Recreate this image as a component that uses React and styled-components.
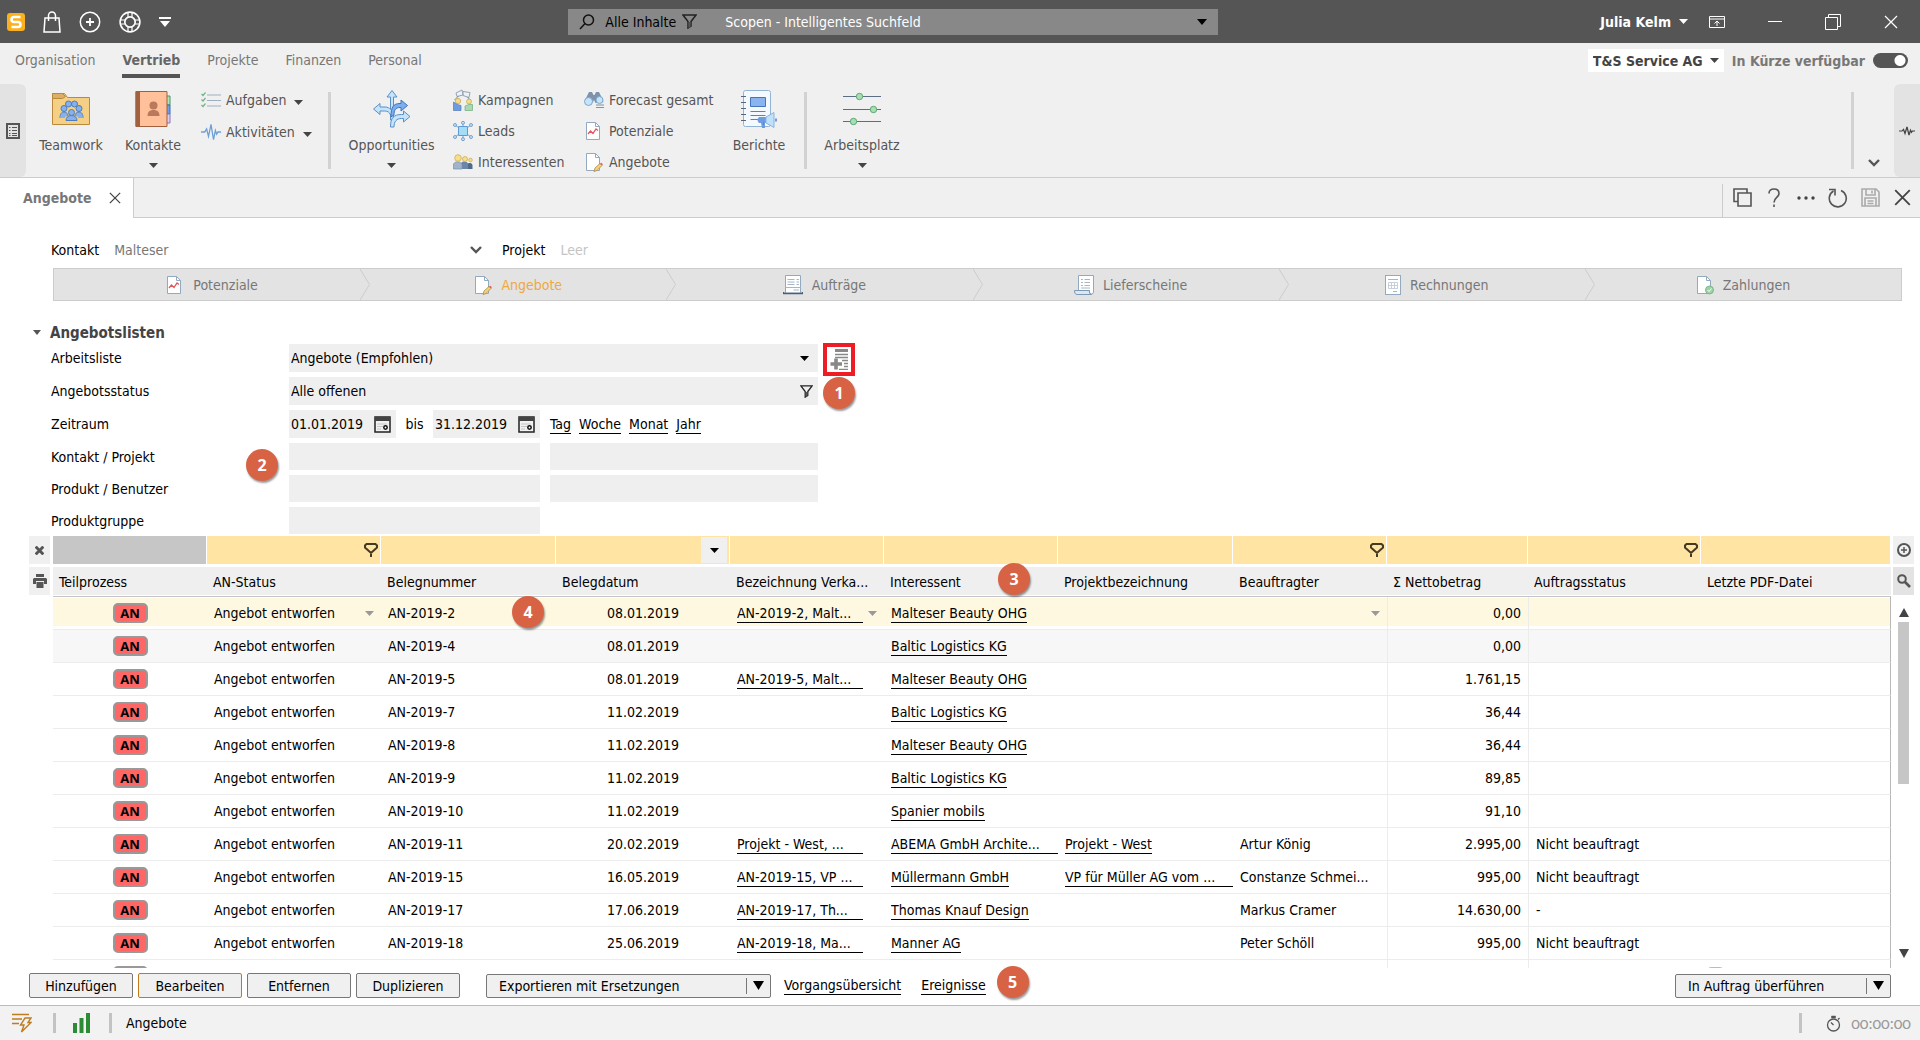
import React from 'react';
import styled, { createGlobalStyle, ThemeProvider, css } from 'styled-components';

const theme = {
  colors: {
    titlebar: '#555555',
    ribbon: '#f0f0f0',
    text: '#000000',
    muted: '#777777',
    dark: '#555555',
    line: '#cccccc',
    filter: '#ffe4a3',
    selected: '#fff8e1',
    accent: '#f0a83c',
    badge: '#d86344',
  },
};

const GlobalStyle = createGlobalStyle`
  * {
    box-sizing: border-box;
  }

  body {
    margin: 0;
  }

  body, button, input, select, table {
    font-family: 'DejaVu Sans Condensed', 'Noto Sans', sans-serif;
    font-size: 14px;
    line-height: 20px;
    color: #000;
  }

  button, select {
    padding: 0;
    border: 0;
    background: none;
    cursor: pointer;
  }

  svg {
    display: block;
    flex: none;
  }
`;

const Page = styled.div`
  display: flex;
  flex-direction: column;
  height: 100vh;
  background: #fff;
  overflow: hidden;
`;

/* ---------- icons ---------- */

const Caret = ({ w = 9, h = 5, color = '#444' }) => (
  <svg width={w} height={h} viewBox="0 0 10 6" preserveAspectRatio="none">
    <path d="M0 0h10L5 6z" fill={color} />
  </svg>
);

const Chevron = () => (
  <svg width="12" height="8" viewBox="0 0 12 8" fill="none" stroke="#555" strokeWidth="2.4">
    <path d="M1 1l5 5 5-5" />
  </svg>
);

const Cross = ({ size = 14, color = '#444', width = 1.5 }) => (
  <svg width={size} height={size} viewBox="0 0 14 14" stroke={color} strokeWidth={width}>
    <path d="M1 1l12 12M13 1L1 13" />
  </svg>
);

const LogoIcon = () => (
  <svg width="18" height="18" viewBox="0 0 18 18">
    <rect width="18" height="18" rx="3" fill="#fbb01e" />
    <path d="M13.5 4H7a2.5 2.5 0 000 5h4a2.5 2.500 0 010 5H4.500" fill="none" stroke="#fff" strokeWidth="2.600" />
  </svg>
);

const BagIcon = () => (
  <svg width="18" height="22" viewBox="0 0 18 22" fill="none" stroke="#fff" strokeWidth="1.5">
    <path d="M2 7h14l1 14H1zM5.500 10V4.500a3.500 3.500 0 017 0V10" />
  </svg>
);

const PlusCircleIcon = () => (
  <svg width="22" height="22" viewBox="0 0 22 22" fill="none" stroke="#fff" strokeWidth="1.5">
    <circle cx="11" cy="11" r="9.700" />
    <path d="M11 7v8M7 11h8" strokeWidth="1.800" />
  </svg>
);

const HelpRingIcon = () => (
  <svg width="22" height="22" viewBox="0 0 22 22" fill="none" stroke="#fff">
    <circle cx="11" cy="11" r="9.900" strokeWidth="1.600" />
    <circle cx="11" cy="11" r="5.200" strokeWidth="1.700" />
    <path d="M9 1.500v4.500M13 1.500v4.500M9 16v4.500M13 16v4.500M1.500 9H6M1.500 13H6M16 9h4.500M16 13h4.500" strokeWidth="1.200" />
  </svg>
);

const QuickMenuIcon = () => (
  <svg width="12" height="10" viewBox="0 0 12 10" fill="#fff">
    <path d="M0 0h12v2H0zM1 4h10L6 10z" />
  </svg>
);

const SearchIcon = () => (
  <svg width="16" height="16" viewBox="0 0 16 16" fill="none" stroke="#111" strokeWidth="1.500">
    <circle cx="9.500" cy="6" r="5" />
    <path d="M6 9.500L1 15" />
  </svg>
);

const FunnelIcon = ({ size = 15 }) => (
  <svg width={size} height={size} viewBox="0 0 15 15" fill="none" stroke="#222" strokeWidth="1.500">
    <path d="M1 1h13L9 7.500V12l-3 2V7.500z" />
    <path d="M6.500 8h2v5l-2 1z" fill="#555" stroke="none" />
  </svg>
);

const ColumnFilterIcon = () => (
  <svg width="14" height="14" viewBox="0 0 14 14" fill="none" stroke="#443a22" strokeWidth="2">
    <path d="M2.500 1h9L13 2.500v2L7 10 1 4.500v-2zM7 9.500V14" />
  </svg>
);

const RibbonToggleIcon = () => (
  <svg width="16" height="12" viewBox="0 0 16 12" fill="none" stroke="#fff">
    <path d="M.5.5h15v11H.5zM.5 3h15M8 10V5.500M5.500 7.500L8 5l2.500 2.500" />
  </svg>
);

const RestoreIcon = () => (
  <svg width="16" height="16" viewBox="0 0 16 16" fill="none" stroke="#fff">
    <path d="M.5 3.500h12v12H.5zM3.500 3.500v-3h12v12h-3" />
  </svg>
);

const ListPanelIcon = () => (
  <svg width="14" height="16" viewBox="0 0 14 16" fill="none" stroke="#555">
    <path d="M1 1h12v14H1z" strokeWidth="2" />
    <path d="M3 4.500h1.500M6 4.500h5M3 7.500h1.500M6 7.500h5M3 10.500h1.500M6 10.500h5M3 12.500h1.500M6 12.500h5" />
  </svg>
);

const PulseIcon = ({ w = 16, h = 10, color = '#444', stroke = 1.3 }) => (
  <svg width={w} height={h} viewBox="0 0 16 12" fill="none" stroke={color} strokeWidth={stroke} preserveAspectRatio="none">
    <path d="M0 6h3l1.500-2L6 9l2-8 2 10 1.500-6 1 2.500 1-1.500H16" />
  </svg>
);

const FolderTeamIcon = () => (
  <svg width="38" height="34" viewBox="0 0 38 34">
    <path d="M.5 1.500h12l3 4h22v27H.5z" fill="#f5cf83" stroke="#b98a3d" />
    <path d="M.5 1.500h10l3 3-3 2H.5z" fill="#dcae66" stroke="#b98a3d" />
    <g fill="#86b1ec" stroke="#4f7cb8">
      <circle cx="16.500" cy="12" r="3" />
      <circle cx="22.500" cy="12" r="3" />
      <circle cx="12" cy="16.500" r="3" />
      <circle cx="27" cy="16.500" r="3" />
      <path d="M8 26c0-4 1.500-6 4-6s4 2 4 4M31 26c0-4-1.500-6-4-6s-4 2-4 4" />
      <circle cx="19.500" cy="20.500" r="3" />
      <path d="M14 28.500c0-3 2-5 5.500-5s5.500 2 5.500 5z" />
      <path d="M8 26h5v-3H9zM31 26h-5v-3h4z" stroke="none" />
    </g>
  </svg>
);

const ContactsIcon = () => (
  <svg width="36" height="36" viewBox="0 0 36 36">
    <path d="M31 5h4v9h-4z" fill="#b5e2b8" stroke="#4d9462" />
    <path d="M31 14h4v9h-4z" fill="#6da0ec" stroke="#3d6dad" />
    <path d="M31 23h4v9h-4z" fill="#dcd0f2" stroke="#8a74b5" />
    <path d="M1 .5h31v35H1z" fill="#ffc09a" stroke="#a1603f" />
    <path d="M.5.5H5v35H.5z" fill="#a1603f" />
    <circle cx="18.500" cy="14.500" r="4" fill="#b9795a" />
    <path d="M12.500 25c0-4 2-6 6-6s6 2 6 6z" fill="#b9795a" />
  </svg>
);

const TasksIcon = () => (
  <svg width="20" height="16" viewBox="0 0 20 16" fill="none">
    <path d="M6 3h14M6 8.500h14M6 14h14" stroke="#9fb0c3" />
    <path d="M.5 2l1.500 1.500L4.500.5M.5 7.500L2 9l2.500-3M.5 13L2 14.500l2.500-3" stroke="#6fb587" strokeWidth="1.200" />
  </svg>
);

const BigArrowsIcon = () => (
  <svg width="38" height="38" viewBox="0 0 38 38">
    <g fill="#c3e4fb" stroke="#5a8fc4">
      <path d="M17.500 30v-5c-1-3-3-4-6-4H7v3.500L.5 19 7 13.500V17h5c2.500 0 4.500 1 5.500 2.500V7H14L19 .5 24 7h-3.500v23z" />
      <path d="M17.500 37c0-9 3-12.500 11-12.500h2V21l6.500 5.500-6.500 5.500v-3.500h-2c-5 0-7.500 3-7.500 8.500z" />
    </g>
    <path d="M18 27c0-9.500 2-13.500 9-13.500h1V10l6.500 5.500L28 21v-3.500h-1c-4.500 0-6 3-6 7.500z" fill="#7aaef0" stroke="#3f74b8" />
  </svg>
);

const CampaignIcon = () => (
  <svg width="20" height="22" viewBox="0 0 20 22">
    <path d="M3 4l6-3 1 5-6 1.500zM10 2.500l7 1-1 5-6-2z" fill="#eef2f6" stroke="#93a3b5" />
    <path d="M1.500 11l4-4M18 12l-3.500-4" stroke="#6e88a8" />
    <circle cx="5" cy="12" r="2.700" fill="#f4dd86" stroke="#c9a64b" strokeWidth=".7" />
    <circle cx="16" cy="12.500" r="2.500" fill="#f4dd86" stroke="#c9a64b" strokeWidth=".7" />
    <path d="M.5 21.500V13l4 2.500 3.500 1v5z" fill="#6d9de0" stroke="#4f7cb8" strokeWidth=".7" />
    <path d="M12 21.500V17l4-1.500 3.500 0v6z" fill="#a9d9b0" stroke="#6fae7c" strokeWidth=".7" />
  </svg>
);

const LeadsIcon = () => (
  <svg width="20" height="20" viewBox="0 0 20 20">
    <path d="M10 1v18M2 4l4 3M18 4l-4 3M2 16l4-3M18 16l-4-3" stroke="#7aa7d0" />
    <path d="M5.500 5.500h9v9h-9z" fill="#a5dcfa" stroke="#5f9bd0" />
    <g fill="#c9e6f8" stroke="#5a8fc4" strokeWidth=".8">
      <circle cx="10" cy="1.800" r="1.500" />
      <circle cx="10" cy="18.200" r="1.500" />
      <circle cx="2" cy="4" r="1.500" />
      <circle cx="18" cy="4" r="1.500" />
      <circle cx="2" cy="16" r="1.500" />
      <circle cx="18" cy="16" r="1.500" />
    </g>
  </svg>
);

const ProspectsIcon = () => (
  <svg width="20" height="16" viewBox="0 0 20 16">
    <path d="M14 15V9.500c2-1 5-1 5.500 1.500v4z" fill="#52698a" />
    <path d="M8 15V9c2-2 6-2 7 1v5z" fill="#6d86a8" />
    <path d="M.5 15v-5c2-3 6-3 8.500 0v5z" fill="#a0b3ca" stroke="#7790ac" strokeWidth=".7" />
    <g fill="#f7df8a" stroke="#c9a64b" strokeWidth=".7">
      <circle cx="5" cy="4" r="3.300" />
      <circle cx="12" cy="5" r="2.500" />
      <circle cx="17.500" cy="6" r="1.800" />
    </g>
  </svg>
);

const BinocularsIcon = () => (
  <svg width="20" height="18" viewBox="0 0 20 18">
    <path d="M3 5l2-4h3l1.500 3h1L12 1h3l2 4 2.500 6-8 1-1.500-3-1.500 3-8-1z" fill="#7f92ab" />
    <circle cx="4.500" cy="10.500" r="4" fill="#c3e4fb" stroke="#7fa6c9" />
    <circle cx="15.500" cy="9" r="3.500" fill="#c3e4fb" stroke="#7fa6c9" />
    <path d="M12 14h8M12 16.500h8" stroke="#7f92ab" />
  </svg>
);

const Sheet = ({ children }) => (
  <svg width="18" height="20" viewBox="0 0 18 20">
    <path d="M1.500 1.500h9l4 4v13h-13z" fill="#fff" stroke="#93a9c0" />
    <path d="M10.500 1.500v4h4" fill="none" stroke="#93a9c0" />
    {children}
  </svg>
);

const PotentialIcon = () => (
  <Sheet>
    <path d="M3 13l2.500-3L8 12.500 11 8l2 1.500" fill="none" stroke="#e0575c" strokeWidth="1.300" />
  </Sheet>
);

const OfferIcon = () => (
  <Sheet>
    <path d="M9 19.500l1-3.500 5-4.500 2 2-5 5z" fill="#f5d27a" stroke="#a98a45" strokeWidth=".8" />
    <path d="M15 11.500l2 2 .8-1.300-1.500-1.500z" fill="#e0575c" />
  </Sheet>
);

const PaymentIcon = () => (
  <Sheet>
    <circle cx="13.500" cy="15" r="4" fill="#9fd3a5" stroke="#6fae7c" strokeWidth=".8" />
    <path d="M11.500 15l1.500 1.500 2.500-3" fill="none" stroke="#fff" />
  </Sheet>
);

const OrderIcon = () => (
  <svg width="20" height="20" viewBox="0 0 20 20" fill="none">
    <path d="M2.500.5h15V18h-15z" fill="#fff" stroke="#93a9c0" />
    <path d="M4.500 4.500h7M13.500 4.500H16M4.500 7h7M13.500 7H16M4.500 9.500h7M13.500 9.500H16M2.500 12.500h15M10.500 15H16" stroke="#a6b6c8" />
    <path d="M.5 17v1.500h19V17" stroke="#4c5f78" strokeWidth="1.500" />
  </svg>
);

const DeliveryIcon = () => (
  <svg width="20" height="20" viewBox="0 0 20 20" fill="none">
    <path d="M4.500.5h15V17a2 2 0 01-4 0v-1.500h-11z" fill="#fff" stroke="#93a9c0" />
    <path d="M.5 15.500h15c-.5 2 .5 4 2 4H3c-2 0-2.500-2-2.500-4z" fill="#d9e8f4" stroke="#7f98b3" />
    <path d="M7 4.500h2M10.500 4.500H16M7 7.500h2M10.500 7.500H16M7 10.500h2M10.500 10.500H16M7 13h9" stroke="#a6b6c8" />
  </svg>
);

const InvoiceIcon = () => (
  <svg width="16" height="20" viewBox="0 0 16 20" fill="none">
    <rect x=".5" y=".5" width="15" height="19" fill="#fff" stroke="#93a9c0" />
    <path d="M3 4.500h10M8 16.500h4" stroke="#a6b6c8" />
    <path d="M3.500 7.500h9v6h-9zM3.500 10.500h9M6.500 7.500v6M9.500 7.500v6" stroke="#c5d0dc" />
  </svg>
);

const ReportsIcon = () => (
  <svg width="36" height="39" viewBox="0 0 36 39" fill="none">
    <rect x="2.500" y=".5" width="27" height="36" rx="2" fill="#f3f9fe" stroke="#90b3d6" />
    <path d="M0 6.500h5M0 12.500h5M0 18.500h5M0 24.500h5M0 30.500h5" stroke="#54687f" />
    <path d="M9.500 7.500h15v9h-15z" fill="#8ab4f0" stroke="#4475b8" />
    <path d="M9.500 21.500h15M9.500 25.500h15M9.500 29.500h8" stroke="#6c8199" />
    <path d="M18 27h7v6h-7c-2-2-2-4 0-6z" fill="#6d9de0" />
    <path d="M25 27l8-4.500v15L25 33z" fill="#bfe2fa" stroke="#8ab4dd" />
    <path d="M20 33h4v5h-3z" fill="#6d9de0" />
    <path d="M22.500 32v3" stroke="#e0575c" />
    <path d="M34 28.500h2v3h-2z" fill="#6d9de0" />
  </svg>
);

const SlidersIcon = () => (
  <svg width="38" height="34" viewBox="0 0 38 34">
    <path d="M0 4.500h38M0 17.500h38M0 29.500h38" stroke="#5c6e86" />
    <g fill="#a9ddb3" stroke="#5fa772">
      <circle cx="16.500" cy="4.500" r="3.200" />
      <circle cx="30.500" cy="17.500" r="3.200" />
      <circle cx="10.500" cy="29.500" r="3.200" />
    </g>
  </svg>
);

const CopyIcon = () => (
  <svg width="19" height="19" viewBox="0 0 19 19" fill="none" stroke="#555" strokeWidth="1.600">
    <path d="M5 13.500H1V1h13v3.500M5 5h13v13H5z" />
  </svg>
);

const QuestionIcon = () => (
  <svg width="12" height="19" viewBox="0 0 12 19" fill="none" stroke="#555" strokeWidth="1.600">
    <path d="M1 5.500C1 2.500 3 1 6 1s5 1.500 5 4.500c0 4-5 4-5 9M6 16.500V19" />
  </svg>
);

const DotsIcon = () => (
  <svg width="18" height="4" viewBox="0 0 18 4" fill="#444">
    <circle cx="2" cy="2" r="1.700" />
    <circle cx="9" cy="2" r="1.700" />
    <circle cx="16" cy="2" r="1.700" />
  </svg>
);

const ReloadIcon = () => (
  <svg width="20" height="20" viewBox="0 0 20 20" fill="none" stroke="#555" strokeWidth="1.600">
    <path d="M13 2.500a8.500 8.500 0 11-7.500.5M1 1.500h6v6" />
  </svg>
);

const SaveIcon = () => (
  <svg width="19" height="19" viewBox="0 0 19 19" fill="none" stroke="#aaa" strokeWidth="1.600">
    <path d="M1 1h14l3 3v14H1zM5 1v6h9V1M4 18v-8h11v8M6.500 13h6M6.500 15.500h6M11 2.500v3" />
  </svg>
);

const CalendarIcon = () => (
  <svg width="17" height="17" viewBox="0 0 17 17">
    <path d="M1 1h15v15H1z" fill="#f2f2f2" stroke="#222" strokeWidth="1.500" />
    <path d="M1 1h15v4H1z" fill="#444" />
    <path d="M3.500 8h10M3.500 10.500h5M3.500 13h4" stroke="#999" strokeDasharray="1 1" />
    <circle cx="11.500" cy="11.500" r="1.700" fill="#fff" stroke="#111" strokeWidth="1.500" />
  </svg>
);

const AddListIcon = () => (
  <svg width="19" height="21" viewBox="0 0 19 21" stroke="#888" fill="none">
    <path d="M5 1.500h13" strokeWidth="3" />
    <path d="M5 5.500h13M5 8.500h13M12 11.500h6M14 14.500h4M14 17.500h4M9 20.500h9" strokeWidth="1.400" />
    <path d="M6 9.500v11M.5 15h11.500" strokeWidth="3.600" />
  </svg>
);

const PrinterIcon = () => (
  <svg width="14" height="14" viewBox="0 0 14 14" fill="#555">
    <path d="M3 0h8v3H3zM1 4h12l1 1v5h-3V7H3v3H0V5zM3.500 8h7v6h-7z" />
  </svg>
);

const CirclePlusSmallIcon = () => (
  <svg width="14" height="14" viewBox="0 0 14 14" fill="none" stroke="#555" strokeWidth="1.500">
    <circle cx="7" cy="7" r="6" strokeWidth="2" />
    <path d="M7 4v6M4 7h6" />
  </svg>
);

const ZoomSmallIcon = () => (
  <svg width="14" height="14" viewBox="0 0 14 14" fill="none" stroke="#555" strokeWidth="2">
    <circle cx="5" cy="5" r="3.800" />
    <path d="M8 8l5 5" strokeWidth="2.600" />
  </svg>
);

const ScrollArrow = ({ down }) => (
  <svg width="10" height="9" viewBox="0 0 10 9" fill="#444">
    <path d={down ? 'M0 0h10L5 9z' : 'M0 9h10L5 0z'} />
  </svg>
);

const LightningIcon = () => (
  <svg width="20" height="20" viewBox="0 0 20 20" fill="none" stroke="#bd7d22" strokeWidth="1.400">
    <path d="M0 1.500h17M0 6h10M0 10.500h7M13 5h6l-3 4.500h3L9.500 19l2.500-7H8.500z" />
  </svg>
);

const SignalIcon = () => (
  <svg width="17" height="20" viewBox="0 0 17 20" fill="#2d8a35">
    <path d="M0 10h4v10H0zM6.500 5h4v15h-4zM13 0h4v20h-4z" />
  </svg>
);

const StopwatchIcon = () => (
  <svg width="15" height="17" viewBox="0 0 15 17" fill="none" stroke="#555" strokeWidth="1.300">
    <circle cx="7.500" cy="10" r="6" />
    <path d="M7.500 10L5 7.500M12 4.500l1.500-1.500" />
    <path d="M5.500 1h4v2h-4z" fill="#555" strokeWidth=".5" />
  </svg>
);

const DocIcon = () => (
  <svg width="15" height="18" viewBox="0 0 15 18">
    <rect x=".5" y=".5" width="14" height="17" rx="2" fill="#eee" stroke="#bbb" />
  </svg>
);

/* ---------- title bar ---------- */

const TitleBar = styled.header`
  display: flex;
  align-items: center;
  height: 43px;
  flex: none;
  background: ${props => props.theme.colors.titlebar};
`;

const QuickAccess = styled.div`
  flex: 4;
  display: flex;
  align-items: center;
  gap: 18px;
  padding-left: 7px;
`;

const WindowTools = styled.div`
  flex: 5;
  display: flex;
  align-items: center;
  justify-content: flex-end;
`;

const IconButton = styled.button`
  display: flex;
  align-items: center;
  justify-content: center;
`;

const SearchBar = styled.div`
  display: flex;
  align-items: center;
  width: 650px;
  height: 26px;
  padding: 0 11px;
  background: #888;
`;

const SearchScope = styled.button`
  display: flex;
  align-items: center;
  gap: 6px;
  margin: 0 28px 0 10px;
`;

const SearchInput = styled.input`
  flex: 1;
  min-width: 0;
  padding: 0;
  border: 0;
  background: none;

  &::placeholder {
    color: #fff;
    opacity: 1;
  }
`;

const UserButton = styled.button`
  display: flex;
  align-items: center;
  gap: 8px;
  margin-right: 21px;
  color: #fff;
  font-weight: 700;
`;

const WindowButtons = styled.div`
  display: flex;
  margin-left: 21px;
`;

const WindowButton = styled.button`
  display: flex;
  align-items: center;
  justify-content: center;
  width: 58px;
  height: 43px;
`;

const MinimizeLine = styled.span`
  width: 14px;
  height: 1px;
  background: #fff;
`;

/* ---------- ribbon ---------- */

const MenuBar = styled.nav`
  display: flex;
  align-items: flex-start;
  justify-content: space-between;
  flex: none;
  height: 41px;
  padding: 6px 12px 0 15px;
  background: ${props => props.theme.colors.ribbon};
`;

const MenuTabs = styled.div`
  display: flex;
  gap: 27px;
`;

const MenuTab = styled.a`
  padding: 1px 0 4px;
  border-bottom: 4px solid ${props => (props.$active ? props.theme.colors.dark : 'transparent')};
  color: ${props => (props.$active ? '#666' : props.theme.colors.muted)};
  font-weight: ${props => (props.$active ? 700 : 400)};
  text-decoration: none;
`;

const MenuRight = styled.div`
  display: flex;
  align-items: center;
  gap: 8px;
`;

const CompanyPicker = styled.div`
  display: flex;
  align-items: center;
  height: 23px;
  padding: 0 5px;
  background: #fff;

  select {
    appearance: none;
    color: #444;
    font-weight: 700;
    padding-right: 7px;
  }
`;

const SoonLabel = styled.label`
  color: ${props => props.theme.colors.muted};
  font-weight: 700;
`;

const Toggle = styled.input`
  appearance: none;
  width: 35px;
  height: 15px;
  margin: 0;
  border-radius: 8px;
  background: radial-gradient(circle at 27px 50%, #fff 0 5px, transparent 6px) #555;
`;

const Ribbon = styled.div`
  display: flex;
  flex: none;
  height: 94px;
  background: ${props => props.theme.colors.ribbon};
  border-bottom: 1px solid ${props => props.theme.colors.line};
`;

const SidePanelButton = styled.button`
  display: flex;
  align-items: center;
  justify-content: center;
  width: 26px;
  background: #e3e3e3;
  border-radius: ${props => (props.$right ? '6px 0 0 6px' : '0 6px 6px 0')};
`;

const RibbonContent = styled.div`
  flex: 1;
  display: flex;
  padding-right: 14px;
`;

const LargeButton = styled.button`
  display: grid;
  grid-template-rows: 50px 22px 18px;
  justify-items: center;
  align-items: center;
  align-content: start;
  width: ${props => props.$width}px;
  color: ${props => props.theme.colors.dark};
`;

const SmallColumn = styled.div`
  display: flex;
  flex-direction: column;
  width: ${props => props.$width}px;
  padding-left: ${props => props.$indent || 0}px;
`;

const SmallButton = styled.button`
  display: flex;
  align-items: center;
  gap: 5px;
  height: 32px;
  white-space: nowrap;
  color: ${props => props.theme.colors.dark};
`;

const SmallIcon = styled.span`
  display: flex;
  justify-content: center;
  width: 20px;
`;

const SmallCaret = styled.span`
  padding: 4px 0 0 3px;
`;

const RibbonDivider = styled.span`
  width: 3px;
  height: 77px;
  margin: 8px ${props => props.$after || 0}px 0 ${props => props.$before || 0}px;
  background: #d2d2d2;
`;

const ExpandButton = styled.button`
  align-self: flex-end;
  padding-bottom: 10px;
`;

const Spacer = styled.div`
  flex: 1;
`;

/* ---------- document tabs ---------- */

const DocBar = styled.div`
  display: flex;
  justify-content: space-between;
  flex: none;
  height: 40px;
  background: ${props => props.theme.colors.ribbon};
`;

const DocTab = styled.div`
  display: flex;
  align-items: center;
  gap: 17px;
  padding: 0 12px 0 23px;
  background: #fff;
  border-right: 1px solid ${props => props.theme.colors.line};
  color: ${props => props.theme.colors.muted};
  font-weight: 700;
`;

const DocFill = styled.div`
  flex: 1;
  display: flex;
  justify-content: flex-end;
  padding-top: 6px;
  border-bottom: 1px solid ${props => props.theme.colors.line};
`;

const DocActions = styled.div`
  display: grid;
  grid-template-columns: repeat(6, 32px);
  padding: 0 2px 6px 3px;
  border-left: 1px solid ${props => props.theme.colors.line};
`;

/* ---------- content ---------- */

const Content = styled.main`
  flex: 1;
  min-height: 0;
  display: flex;
  flex-direction: column;
  padding-top: 18px;
`;

const ContextRow = styled.div`
  display: flex;
  align-items: center;
  flex: none;
  gap: 20px;
  height: 28px;
  margin: 0 0 4px 51px;
`;

const ContextField = styled.div`
  display: flex;
  align-items: center;
  width: ${props => props.$width}px;

  label {
    margin-right: 15px;
  }
`;

const ContextInput = styled.input`
  flex: 1;
  min-width: 0;
  padding: 0;
  border: 0;
  color: ${props => props.theme.colors.muted};

  &::placeholder {
    color: #c4c4c4;
    opacity: 1;
  }
`;

const ProcessBar = styled.nav`
  display: flex;
  flex: none;
  height: 33px;
  margin: 0 18px 0 53px;
  padding-right: 10px;
  border: 1px solid ${props => props.theme.colors.line};
  background: #e3e3e3;
`;

const ProcessStep = styled.a`
  flex: 1;
  display: flex;
  align-items: center;
  color: ${props => (props.$active ? props.theme.colors.accent : props.theme.colors.muted)};
  text-decoration: none;
`;

const StepLabel = styled.span`
  flex: 1;
  display: flex;
  align-items: center;
  justify-content: center;
  gap: 9px;
  padding-left: 10px;
`;

/* reaches into the next step */
const StepArrow = styled.svg`
  margin-right: -10px;
`;

const SectionHead = styled.h2`
  display: flex;
  align-items: center;
  gap: 9px;
  flex: none;
  height: 23px;
  margin: 20px 0 0 33px;
  color: #444;
  font-size: 15px;
  font-weight: 700;
`;

const FilterArea = styled.div`
  display: flex;
  flex: none;
  gap: 5px;
  margin: 0 0 2px 51px;
`;

const FilterGrid = styled.form`
  position: relative;
  display: grid;
  grid-template-columns: 228px 251px 268px;
  grid-template-rows: repeat(3, 28px) repeat(3, 27px);
  gap: 5px 10px;
  align-items: center;
`;

const FieldBox = styled.div`
  display: flex;
  align-items: center;
  align-self: stretch;
  padding: 0 5px 0 2px;
  background: #efefef;
  ${props =>
    props.$wide &&
    css`
      grid-column: 2 / 4;
    `}

  input,
  select {
    appearance: none;
    flex: 1;
    min-width: 0;
    padding: 0;
    border: 0;
    background: none;
  }

  > svg {
    margin-right: 4px;
  }
`;

const DateRange = styled.div`
  display: grid;
  grid-template-columns: 107px 1fr 107px;
  align-self: stretch;
  align-items: center;
  text-align: center;
`;

const QuickRanges = styled.div`
  grid-column: 3;
  display: flex;
  gap: 8px;
`;

const TextLink = styled.a`
  color: #000;
  line-height: 18px;
  text-decoration: none;
  border-bottom: 1px solid #000;
`;

const SideTools = styled.div`
  display: flex;
  flex-direction: column;
  align-items: center;
  gap: 5px;
  width: 32px;
  padding-top: 3px;
`;

const AddButton = styled.button`
  display: flex;
  align-items: center;
  justify-content: center;
  width: 24px;
  height: 25px;
  outline: 4px solid #ee1c25;
`;

const Badge = styled.span`
  display: flex;
  align-items: center;
  justify-content: center;
  width: 32px;
  height: 32px;
  border-radius: 50%;
  background: ${props => props.theme.colors.badge};
  box-shadow: 1px 2px 2px rgba(0, 0, 0, 0.4);
  color: #fff;
  font: 700 16px 'Open Sans', sans-serif;
`;

const FloatingBadge = styled(Badge)`
  position: absolute;
  left: ${props => props.$left}px;
  top: ${props => props.$top}px;
  z-index: 1;
`;

/* ---------- table ---------- */

const TableArea = styled.section`
  flex: 1;
  min-height: 0;
  display: flex;
  padding: 0 6px 0 29px;
`;

const Rail = styled.div`
  display: flex;
  flex-direction: column;
  align-items: center;
  gap: 3px;
  width: 21px;
`;

const RailButton = styled.button`
  display: flex;
  align-items: center;
  justify-content: center;
  width: 100%;
  height: 28px;
  background: ${props => (props.$dark ? '#e3e3e3' : '#f0f0f0')};
`;

const ScrollBar = styled.div`
  flex: 1;
  display: flex;
  flex-direction: column;
  align-items: center;
  gap: 5px;
  padding: 10px 0;
`;

const ScrollThumb = styled.div`
  width: 11px;
  height: 162px;
  background: #c6c6c6;
`;

const TableClip = styled.div`
  flex: 1;
  min-width: 0;
  margin: 0 2px 0 3px;
  overflow: hidden;
`;

const Table = styled.table`
  width: 100%;
  table-layout: fixed;
  border-collapse: separate;
  border-spacing: 0;
`;

const FilterCell = styled.td`
  height: 31px;
  padding: 0;
  border-bottom: 3px solid #fff;
  border-right: 1px solid #fff;
  background: ${props => (props.$plain ? '#c6c6c6' : props.theme.colors.filter)};

  button {
    margin: 0 2px 0 auto;
  }
`;

const DropButton = styled(IconButton)`
  width: 26px;
  height: 26px;
  background: #f0f0f0;
`;

const HeadCell = styled.th`
  position: relative;
  height: 30px;
  padding: 0 0 0 6px;
  border-bottom: 1px solid #c3c3c9;
  box-shadow: inset 0 -1px #fff;
  background: #efefef;
  font-weight: 400;
  text-align: left;
  white-space: nowrap;
`;

const Row = styled.tr`
  background: ${props => (props.$selected ? props.theme.colors.selected : props.$alt ? '#f7f7f7' : '#fff')};

  td {
    ${props =>
      props.$selected &&
      css`
        box-shadow: inset 0 -3px #fff, inset 0 1px #fff;
      `}
  }
`;

const Cell = styled.td`
  position: relative;
  height: 33px;
  padding: 0 ${props => props.$right || 0}px 0 7px;
  border-bottom: 1px solid #ececec;
  text-align: ${props => props.$align || 'left'};
  white-space: nowrap;
  ${props =>
    props.$lined &&
    css`
      border-left: 1px solid #ececec;
    `}
  &:last-child {
    border-right: 1px solid #b8b8b8;
  }
`;

const CellFlex = styled.div`
  display: flex;
  align-items: center;
  justify-content: space-between;
`;

const RecordLink = styled(TextLink)`
  display: inline-block;
  overflow: hidden;
  vertical-align: middle;
  min-width: ${props => (props.$cut ? '100%' : '0')};
  max-width: 100%;
`;

const NameCell = styled.div`
  width: 126px;
`;

const Pill = styled.span`
  display: block;
  width: 35px;
  height: 20px;
  margin: 0 auto;
  border: 2px solid #999;
  border-radius: 5px;
  background: #ff6666;
  font: 700 13px/16px 'Open Sans', sans-serif;
  text-align: center;
`;

/* ---------- footer ---------- */

const ActionBar = styled.div`
  display: flex;
  align-items: center;
  flex: none;
  gap: 5px;
  height: 37px;
  padding: 0 29px 2px;
`;

const ActionButton = styled.button`
  width: 104px;
  height: 25px;
  border: 1px solid ${props => (props.$primary ? '#c07a1c' : '#777')};
  border-radius: 2px;
  background: #f0f0f0;
`;

const SplitButton = styled.div`
  display: flex;
  align-items: center;
  width: ${props => props.$width}px;
  height: 24px;
  margin: 0 8px 0 ${props => (props.$push ? 'auto' : '21px')};
  padding-left: 12px;
  border: 1px solid #777;
  border-radius: 2px;
  background: #f0f0f0;

  button:first-child {
    flex: 1;
    text-align: left;
  }

  button:last-child {
    height: 16px;
    padding: 0 6px;
    border-left: 1px solid #777;
  }

  &:last-child {
    margin-right: 0;
  }
`;

const ActionLink = styled(TextLink)`
  margin-right: 15px;
`;

const BadgeAnchor = styled.span`
  position: relative;
`;

const StatusBar = styled.footer`
  display: flex;
  align-items: center;
  flex: none;
  height: 35px;
  padding: 0 9px 0 12px;
  border-top: 1px solid #bbb;
  background: #f2f2f2;
`;

const StatusDivider = styled.span`
  width: 3px;
  height: 20px;
  margin: 0 ${props => props.$right}px 0 ${props => props.$left}px;
  background: #c3c3c3;
`;

const Timer = styled.span`
  margin-left: 10px;
  color: #999;
  font: 16px/20px Lato, sans-serif;
  font-variant-numeric: oldstyle-nums;
`;

const menuTabs = ['Organisation', 'Vertrieb', 'Projekte', 'Finanzen', 'Personal'];

const steps = [
  ['Potenziale', PotentialIcon],
  ['Angebote', OfferIcon],
  ['Aufträge', OrderIcon],
  ['Lieferscheine', DeliveryIcon],
  ['Rechnungen', InvoiceIcon],
  ['Zahlungen', PaymentIcon],
];

const columns = [
  { title: 'Teilprozess', width: 154, plain: true },
  { title: 'AN-Status', width: 174, filter: true },
  { title: 'Belegnummer', width: 175 },
  { title: 'Belegdatum', width: 174, drop: true },
  { title: 'Bezeichnung Verka...', width: 154 },
  { title: 'Interessent', width: 174 },
  { title: 'Projektbezeichnung', width: 175 },
  { title: 'Beauftragter', width: 154, filter: true },
  { title: 'Σ Nettobetrag', width: 141 },
  { title: 'Auftragsstatus', width: 173, filter: true },
  { title: 'Letzte PDF-Datei' },
];

const offers = [
  { no: 'AN-2019-2', date: '08.01.2019', name: 'AN-2019-2, Malt...', customer: 'Malteser Beauty OHG', sum: '0,00' },
  { no: 'AN-2019-4', date: '08.01.2019', customer: 'Baltic Logistics KG', sum: '0,00' },
  { no: 'AN-2019-5', date: '08.01.2019', name: 'AN-2019-5, Malt...', customer: 'Malteser Beauty OHG', sum: '1.761,15' },
  { no: 'AN-2019-7', date: '11.02.2019', customer: 'Baltic Logistics KG', sum: '36,44' },
  { no: 'AN-2019-8', date: '11.02.2019', customer: 'Malteser Beauty OHG', sum: '36,44' },
  { no: 'AN-2019-9', date: '11.02.2019', customer: 'Baltic Logistics KG', sum: '89,85' },
  { no: 'AN-2019-10', date: '11.02.2019', customer: 'Spanier mobils', sum: '91,10' },
  { no: 'AN-2019-11', date: '20.02.2019', name: 'Projekt - West, ...', customer: 'ABEMA GmbH Archite...', project: 'Projekt - West', agent: 'Artur König', sum: '2.995,00', state: 'Nicht beauftragt' },
  { no: 'AN-2019-15', date: '16.05.2019', name: 'AN-2019-15, VP ...', customer: 'Müllermann GmbH', project: 'VP für Müller AG vom ...', agent: 'Constanze Schmei...', sum: '995,00', state: 'Nicht beauftragt' },
  { no: 'AN-2019-17', date: '17.06.2019', name: 'AN-2019-17, Th...', customer: 'Thomas Knauf Design', agent: 'Markus Cramer', sum: '14.630,00', state: '-' },
  { no: 'AN-2019-18', date: '25.06.2019', name: 'AN-2019-18, Ma...', customer: 'Manner AG', agent: 'Peter Schöll', sum: '995,00', state: 'Nicht beauftragt' },
];

const Record = ({ children }) =>
  children ? (
    <RecordLink href="#" $cut={children.endsWith('...')}>
      {children}
    </RecordLink>
  ) : null;

const Large = ({ icon, label, width, menu }) => (
  <LargeButton type="button" $width={width}>
    {icon}
    <span>{label}</span>
    {menu && <Caret />}
  </LargeButton>
);

const Small = ({ icon, label, menu }) => (
  <SmallButton type="button">
    <SmallIcon>{icon}</SmallIcon>
    {label}
    {menu && (
      <SmallCaret>
        <Caret />
      </SmallCaret>
    )}
  </SmallButton>
);

const DateField = ({ id, value, label }) => (
  <FieldBox>
    <input id={id} aria-label={label} defaultValue={value} />
    <IconButton type="button" aria-label="Kalender">
      <CalendarIcon />
    </IconButton>
  </FieldBox>
);

const OfferRow = ({ offer, index }) => {
  const selected = index === 0;

  return (
    <Row $selected={selected} $alt={index === 1}>
      <Cell $right={7}>
        <Pill>AN</Pill>
      </Cell>
      <Cell $right={7}>
        <CellFlex>
          Angebot entworfen
          {selected && <Caret color="#999" />}
        </CellFlex>
      </Cell>
      <Cell>
        {offer.no}
        {selected && (
          <FloatingBadge $left={131} $top={-1}>
            4
          </FloatingBadge>
        )}
      </Cell>
      <Cell $align="center" $right={7}>
        {offer.date}
      </Cell>
      <Cell $right={7}>
        <CellFlex>
          <NameCell>
            <Record>{offer.name}</Record>
          </NameCell>
          {selected && <Caret color="#999" />}
        </CellFlex>
      </Cell>
      <Cell>
        <Record>{offer.customer}</Record>
      </Cell>
      <Cell>
        <Record>{offer.project}</Record>
      </Cell>
      <Cell $right={7}>
        <CellFlex>
          <span>{offer.agent}</span>
          {selected && <Caret color="#999" />}
        </CellFlex>
      </Cell>
      <Cell $align="right" $right={7} $lined>
        {offer.sum}
      </Cell>
      <Cell $lined>{offer.state}</Cell>
      <Cell />
    </Row>
  );
};

export default function App() {
  return (
    <ThemeProvider theme={theme}>
      <GlobalStyle />
      <Page>
        <TitleBar>
          <QuickAccess>
            <LogoIcon />
            <IconButton aria-label="Shop"><BagIcon /></IconButton>
            <IconButton aria-label="Neu"><PlusCircleIcon /></IconButton>
            <IconButton aria-label="Hilfe"><HelpRingIcon /></IconButton>
            <IconButton aria-label="Mehr"><QuickMenuIcon /></IconButton>
          </QuickAccess>
          <SearchBar>
            <SearchIcon />
            <SearchScope>
              Alle Inhalte
              <FunnelIcon />
            </SearchScope>
            <SearchInput aria-label="Suche" placeholder="Scopen - Intelligentes Suchfeld" />
            <IconButton aria-label="Suchverlauf"><Caret w={10} h={6} color="#000" /></IconButton>
          </SearchBar>
          <WindowTools>
            <UserButton>
              Julia Kelm
              <Caret color="#fff" />
            </UserButton>
            <IconButton aria-label="Menüband"><RibbonToggleIcon /></IconButton>
            <WindowButtons>
              <WindowButton aria-label="Minimieren"><MinimizeLine /></WindowButton>
              <WindowButton aria-label="Wiederherstellen"><RestoreIcon /></WindowButton>
              <WindowButton aria-label="Schließen"><Cross color="#fff" width={1.2} /></WindowButton>
            </WindowButtons>
          </WindowTools>
        </TitleBar>

        <MenuBar>
          <MenuTabs>
            {menuTabs.map(tab => (
              <MenuTab key={tab} href="#" $active={tab === 'Vertrieb'}>
                {tab}
              </MenuTab>
            ))}
          </MenuTabs>
          <MenuRight>
            <CompanyPicker>
              <select aria-label="Firma">
                <option>T&amp;S Service AG</option>
              </select>
              <Caret />
            </CompanyPicker>
            <SoonLabel htmlFor="soon">In Kürze verfügbar</SoonLabel>
            <Toggle id="soon" type="checkbox" defaultChecked />
          </MenuRight>
        </MenuBar>

        <Ribbon>
          <SidePanelButton aria-label="Navigation"><ListPanelIcon /></SidePanelButton>
          <RibbonContent>
            <Large icon={<FolderTeamIcon />} label="Teamwork" width={90} />
            <Large icon={<ContactsIcon />} label="Kontakte" width={74} menu />
            <SmallColumn $width={138} $indent={11}>
              <Small icon={<TasksIcon />} label="Aufgaben" menu />
              <Small icon={<PulseIcon w={20} h={18} color="#6d9fd6" stroke={1} />} label="Aktivitäten" menu />
            </SmallColumn>
            <RibbonDivider />
            <Large icon={<BigArrowsIcon />} label="Opportunities" width={121} menu />
            <SmallColumn $width={132} $indent={1}>
              <Small icon={<CampaignIcon />} label="Kampagnen" />
              <Small icon={<LeadsIcon />} label="Leads" />
              <Small icon={<ProspectsIcon />} label="Interessenten" />
            </SmallColumn>
            <SmallColumn $width={138}>
              <Small icon={<BinocularsIcon />} label="Forecast gesamt" />
              <Small icon={<PotentialIcon />} label="Potenziale" />
              <Small icon={<OfferIcon />} label="Angebote" />
            </SmallColumn>
            <Large icon={<ReportsIcon />} label="Berichte" width={74} />
            <RibbonDivider $before={8} $after={5} />
            <Large icon={<SlidersIcon />} label="Arbeitsplatz" width={100} menu />
            <Spacer />
            <RibbonDivider $after={14} />
            <ExpandButton aria-label="Menüband erweitern"><Chevron /></ExpandButton>
          </RibbonContent>
          <SidePanelButton $right aria-label="Aktivität"><PulseIcon /></SidePanelButton>
        </Ribbon>

        <DocBar>
          <DocTab>
            Angebote
            <IconButton aria-label="Tab schließen"><Cross size={12} /></IconButton>
          </DocTab>
          <DocFill>
            <DocActions>
              <IconButton aria-label="Kopieren"><CopyIcon /></IconButton>
              <IconButton aria-label="Hilfe"><QuestionIcon /></IconButton>
              <IconButton aria-label="Mehr"><DotsIcon /></IconButton>
              <IconButton aria-label="Neu laden"><ReloadIcon /></IconButton>
              <IconButton aria-label="Speichern"><SaveIcon /></IconButton>
              <IconButton aria-label="Schließen"><Cross size={17} /></IconButton>
            </DocActions>
          </DocFill>
        </DocBar>

        <Content>
          <ContextRow>
            <ContextField $width={431}>
              <label htmlFor="kontakt">Kontakt</label>
              <ContextInput id="kontakt" defaultValue="Malteser" />
              <IconButton aria-label="Kontakt wählen"><Chevron /></IconButton>
            </ContextField>
            <ContextField $width={400}>
              <label htmlFor="projekt">Projekt</label>
              <ContextInput id="projekt" placeholder="Leer" />
            </ContextField>
          </ContextRow>

          <ProcessBar>
            {steps.map(([label, Icon], i) => (
              <ProcessStep key={label} href="#" $active={label === 'Angebote'}>
                <StepLabel>
                  <Icon />
                  {label}
                </StepLabel>
                {i < steps.length - 1 && (
                  <StepArrow width="10" height="31" viewBox="0 0 10 31" fill="none" stroke="#ccc">
                    <path d="M0 0l9.500 15.500L0 31" />
                  </StepArrow>
                )}
              </ProcessStep>
            ))}
          </ProcessBar>

          <SectionHead>
            <Caret w={8} color="#555" />
            Angebotslisten
          </SectionHead>
          <FilterArea>
            <FilterGrid>
              <label htmlFor="liste">Arbeitsliste</label>
              <FieldBox $wide>
                <select id="liste">
                  <option>Angebote (Empfohlen)</option>
                </select>
                <Caret color="#000" />
              </FieldBox>
              <label htmlFor="status">Angebotsstatus</label>
              <FieldBox $wide>
                <input id="status" defaultValue="Alle offenen" />
                <IconButton type="button" aria-label="Status filtern"><FunnelIcon size={13} /></IconButton>
              </FieldBox>
              <label htmlFor="von">Zeitraum</label>
              <DateRange>
                <DateField id="von" label="Zeitraum von" value="01.01.2019" />
                <label htmlFor="bis">bis</label>
                <DateField id="bis" label="Zeitraum bis" value="31.12.2019" />
              </DateRange>
              <QuickRanges>
                <TextLink href="#">Tag</TextLink>
                <TextLink href="#">Woche</TextLink>
                <TextLink href="#">Monat</TextLink>
                <TextLink href="#">Jahr</TextLink>
              </QuickRanges>
              <label htmlFor="fkontakt">Kontakt / Projekt</label>
              <FieldBox><input id="fkontakt" /></FieldBox>
              <FieldBox><input aria-label="Projekt" /></FieldBox>
              <label htmlFor="fprodukt">Produkt / Benutzer</label>
              <FieldBox><input id="fprodukt" /></FieldBox>
              <FieldBox><input aria-label="Benutzer" /></FieldBox>
              <label htmlFor="fgruppe">Produktgruppe</label>
              <FieldBox><input id="fgruppe" /></FieldBox>
              <FloatingBadge $left={195} $top={105}>2</FloatingBadge>
            </FilterGrid>
            <SideTools>
              <AddButton aria-label="Arbeitsliste hinzufügen"><AddListIcon /></AddButton>
              <Badge>1</Badge>
            </SideTools>
          </FilterArea>

          <TableArea>
            <Rail>
              <RailButton aria-label="Filter löschen"><Cross size={9} color="#555" width={4.5} /></RailButton>
              <RailButton aria-label="Drucken"><PrinterIcon /></RailButton>
            </Rail>
            <TableClip>
              <Table>
                <colgroup>
                  {columns.map(col => (
                    <col key={col.title} width={col.width} />
                  ))}
                </colgroup>
                <thead>
                  <tr>
                    {columns.map(col => (
                      <FilterCell key={col.title} $plain={col.plain}>
                        {col.filter && (
                          <IconButton aria-label={`${col.title} filtern`}><ColumnFilterIcon /></IconButton>
                        )}
                        {col.drop && (
                          <DropButton aria-label="Datum wählen"><Caret color="#000" /></DropButton>
                        )}
                      </FilterCell>
                    ))}
                  </tr>
                  <tr>
                    {columns.map(col => (
                      <HeadCell key={col.title} scope="col">
                        {col.title}
                        {col.title === 'Interessent' && <FloatingBadge $left={114} $top={-4}>3</FloatingBadge>}
                      </HeadCell>
                    ))}
                  </tr>
                </thead>
                <tbody>
                  {offers.map((offer, i) => (
                    <OfferRow key={offer.no} offer={offer} index={i} />
                  ))}
                  <Row>
                    <Cell $right={7}><Pill /></Cell>
                    <Cell />
                    <Cell />
                    <Cell />
                    <Cell />
                    <Cell />
                    <Cell />
                    <Cell />
                    <Cell $lined />
                    <Cell $lined />
                    <Cell><DocIcon /></Cell>
                  </Row>
                </tbody>
              </Table>
            </TableClip>
            <Rail>
              <RailButton aria-label="Spalte hinzufügen"><CirclePlusSmallIcon /></RailButton>
              <RailButton $dark aria-label="Suchen"><ZoomSmallIcon /></RailButton>
              <ScrollBar>
                <ScrollArrow />
                <ScrollThumb />
                <Spacer />
                <ScrollArrow down />
              </ScrollBar>
            </Rail>
          </TableArea>

          <ActionBar>
            <ActionButton>Hinzufügen</ActionButton>
            <ActionButton $primary>Bearbeiten</ActionButton>
            <ActionButton>Entfernen</ActionButton>
            <ActionButton>Duplizieren</ActionButton>
            <SplitButton $width={285}>
              <button>Exportieren mit Ersetzungen</button>
              <button aria-label="Exportoptionen"><Caret w={11} h={9} color="#000" /></button>
            </SplitButton>
            <ActionLink href="#">Vorgangsübersicht</ActionLink>
            <ActionLink href="#">Ereignisse</ActionLink>
            <BadgeAnchor>
              <FloatingBadge $left={-9} $top={-20}>5</FloatingBadge>
            </BadgeAnchor>
            <SplitButton $width={216} $push>
              <button>In Auftrag überführen</button>
              <button aria-label="Weitere Aktionen"><Caret w={11} h={9} color="#000" /></button>
            </SplitButton>
          </ActionBar>
        </Content>

        <StatusBar>
          <LightningIcon />
          <StatusDivider $left={21} $right={17} />
          <SignalIcon />
          <StatusDivider $left={19} $right={14} />
          Angebote
          <Spacer />
          <StatusDivider $left={0} $right={24} />
          <StopwatchIcon />
          <Timer>00:00:00</Timer>
        </StatusBar>
      </Page>
    </ThemeProvider>
  );
}
